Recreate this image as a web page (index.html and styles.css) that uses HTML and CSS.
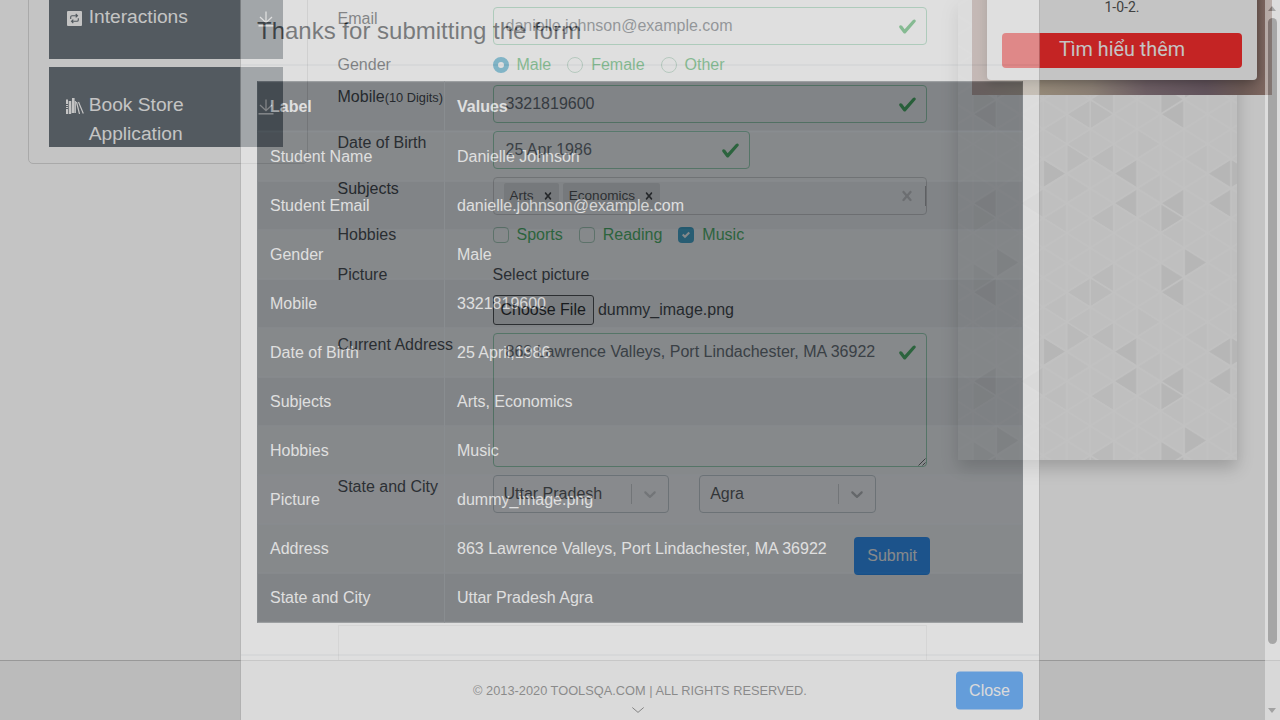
FILE: index.html
```html
<!DOCTYPE html>
<html lang="en">
<head>
<meta charset="utf-8">
<title>Student Registration Form</title>
<link rel="stylesheet" href="styles.css">
</head>
<body>
<svg class="defs" width="0" height="0">
  <defs>
    <symbol id="tick" viewBox="0 0 8 8"><path fill="#28a745" d="M2.3 6.73L.6 4.53c-.4-1.04.46-1.4 1.1-.8l1.1 1.4 3.4-3.8c.6-.63 1.6-.27 1.2.7l-4 4.6c-.43.5-.8.4-1.1.1z"/></symbol>
    <symbol id="down" viewBox="0 0 20 20"><path fill="currentColor" d="M4.516 7.548c0.436-0.446 1.043-0.481 1.576 0l3.908 3.747 3.908-3.747c0.533-0.481 1.141-0.446 1.574 0 0.436 0.445 0.408 1.197 0 1.615-0.406 0.418-4.695 4.502-4.695 4.502-0.217 0.223-0.502 0.335-0.787 0.335s-0.57-0.112-0.789-0.335c0 0-4.287-4.084-4.695-4.502s-0.436-1.17 0-1.615z"/></symbol>
    <symbol id="cross" viewBox="0 0 20 20"><path fill="currentColor" d="M14.348 14.849c-0.469 0.469-1.229 0.469-1.697 0l-2.651-3.030-2.651 3.029c-0.469 0.469-1.229 0.469-1.697 0-0.469-0.469-0.469-1.229 0-1.697l2.758-3.15-2.759-3.152c-0.469-0.469-0.469-1.228 0-1.697s1.228-0.469 1.697 0l2.652 3.031 2.651-3.031c0.469-0.469 1.228-0.469 1.697 0s0.469 1.229 0 1.697l-2.758 3.152 2.758 3.15c0.469 0.469 0.469 1.229 0 1.698z"/></symbol>
    <symbol id="expand" viewBox="0 0 16 16"><path fill="none" stroke="#fff" stroke-width="1.300" d="M8 .5v11M2 6l6 5.700L14 6"/><path fill="none" stroke="#fff" stroke-width="1.600" d="M.5 14.800h15"/></symbol>
  </defs>
</svg>

<div class="page">
  <div class="columns">
    <aside class="sidebar">
      <div class="group">
        <span class="group-label">
          <svg class="group-icon" viewBox="0 0 16 16"><rect x="1" width="15" height="15" rx="1" fill="#fff"/><path fill="none" stroke="#6c757d" stroke-width="1.100" d="M4.700 8V6q0-1.300 1.300-1.300H11M9.700 3l1.800 1.700-1.800 1.700M12.300 7.300V9q0 1.300-1.300 1.300H6M7.300 8.600l-1.800 1.700 1.800 1.700"/></svg>
          <span>Interactions</span>
        </span>
        <svg class="group-arrow"><use href="#expand"/></svg>
      </div>
      <div class="group group-tall">
        <span class="group-label">
          <svg class="group-icon books" viewBox="0 0 18 16"><path fill="#fff" d="M0 1.500h2V6H0zM0 7h2v1H0zM0 9h2v1H0zM0 11h2v5H0zM2.700 3h2.500v13H2.700zM6 0h2.600v15H5.700z"/><path stroke="#fff" stroke-width="1.200" d="M9.300 3l0 12M10.500 4l3 12M12.500 4l4.800 11.500" fill="none"/></svg>
          <span>Book Store<br>Application</span>
        </span>
        <svg class="group-arrow"><use href="#expand"/></svg>
      </div>
    </aside>

    <main class="form">
      <div class="row"><div class="label">Email</div>
        <div class="input">danielle.johnson@example.com<svg class="tick"><use href="#tick"/></svg></div></div>
      <div class="row row-options"><div class="label">Gender</div>
        <div class="options"><span class="opt"><i class="radio on"></i>Male</span><span class="opt"><i class="radio"></i>Female</span><span class="opt"><i class="radio"></i>Other</span></div></div>
      <div class="row"><div class="label">Mobile<small>(10 Digits)</small></div>
        <div class="input">3321819600<svg class="tick"><use href="#tick"/></svg></div></div>
      <div class="row"><div class="label">Date of Birth</div>
        <div class="input date">25 Apr 1986<svg class="tick"><use href="#tick"/></svg></div></div>
      <div class="row"><div class="label">Subjects</div>
        <div class="input tags"><span class="tag">Arts<svg><use href="#cross"/></svg></span><span class="tag">Economics<svg><use href="#cross"/></svg></span><svg class="clear"><use href="#cross"/></svg><i class="sep"></i></div></div>
      <div class="row row-options"><div class="label">Hobbies</div>
        <div class="options"><span class="opt"><i class="check"></i>Sports</span><span class="opt"><i class="check"></i>Reading</span><span class="opt"><i class="check on"><svg viewBox="0 0 8 8"><path fill="#fff" d="M6.564.75l-3.590 3.612-1.538-1.550L0 4.260 2.974 7.250 8 2.193z"/></svg></i>Music</span></div></div>
      <div class="row row-picture"><div class="label">Picture</div>
        <div class="file"><div class="file-title">Select picture</div><div class="file-line"><span class="file-btn">Choose File</span><span>dummy_image.png</span></div></div></div>
      <div class="row row-address"><div class="label">Current Address</div>
        <div class="input area">863 Lawrence Valleys, Port Lindachester, MA 36922<svg class="tick"><use href="#tick"/></svg><svg class="grip" viewBox="0 0 8 8"><path stroke="#333" stroke-width=".9" d="M.5 7.500l7-7M4.500 7.500l3-3"/></svg></div></div>
      <div class="row"><div class="label">State and City</div>
        <div class="selects">
          <div class="select">Uttar Pradesh<i></i><svg class="soft"><use href="#down"/></svg></div>
          <div class="select">Agra<i></i><svg><use href="#down"/></svg></div>
        </div></div>
      <div class="actions"><span class="submit">Submit</span></div>
      <div class="slot"></div>
    </main>

    <div class="ads">
      <svg class="pattern" viewBox="958 0 279 460">
        <defs>
          <path id="tl" d="M1 0l21.900-13.600v27.200z"/>
          <path id="tr" d="M-1 0l-21.900-13.600v27.200z"/>
          <pattern id="mesh" patternUnits="userSpaceOnUse" x="972.900" y="114.300" width="46.930" height="29.670">
            <path fill="none" stroke="#fdfdfd" stroke-width="1.200" d="M0 0v29.670M23.460 0v29.670M46.930 0v29.670M0 0L46.930 29.670M0 29.670L46.930 0"/>
          </pattern>
          <pattern id="cells" patternUnits="userSpaceOnUse" x="940" y="80" width="340" height="178" viewBox="940 80 340 178">
            <g fill="#ededed">
              <use href="#tl" x="972.900" y="114.300"/><use href="#tl" x="1160.600" y="114.300"/>
              <use href="#tr" x="1066" y="173.500"/><use href="#tl" x="1113.700" y="173.500"/><use href="#tl" x="1207.600" y="173.500"/><use href="#tr" x="1254.500" y="173.500"/>
              <use href="#tl" x="972.900" y="203.200"/><use href="#tl" x="1113.700" y="203.200"/><use href="#tl" x="1160.600" y="203.200"/><use href="#tl" x="1207.600" y="203.200"/>
              <use href="#tr" x="1184.100" y="218"/><use href="#tr" x="1207.600" y="84.300"/><use href="#tr" x="1207.600" y="262.300"/>
              <use href="#tr" x="1184.100" y="99.300"/><use href="#tr" x="1019.800" y="84.300"/><use href="#tr" x="1019.800" y="262.300"/>
            </g>
            <g fill="#f2f2f2">
              <use href="#tl" x="1066.800" y="114.300"/><use href="#tr" x="1113.700" y="114.300"/>
              <use href="#tr" x="1090.200" y="158.600"/><use href="#tl" x="1090.200" y="158.600"/><use href="#tl" x="1019.800" y="203.200"/>
              <use href="#tl" x="1090.200" y="218"/><use href="#tr" x="996.400" y="218"/><use href="#tr" x="996.400" y="99.300"/><use href="#tl" x="1090.200" y="99.300"/>
            </g>
            <g fill="#f6f6f6">
              <use href="#tl" x="1043.300" y="129.300"/><use href="#tr" x="1160.600" y="143.900"/><use href="#tl" x="1184.100" y="158.600"/><use href="#tl" x="1066.800" y="144"/><use href="#tl" x="1137.200" y="188.500"/><use href="#tr" x="1090.200" y="188.500"/><use href="#tl" x="1137.200" y="218"/><use href="#tl" x="1043.300" y="218"/><use href="#tl" x="1160.600" y="233"/>
            </g>
          </pattern>
        </defs>
        <rect x="958" width="279" height="460" fill="#f9f9f9"/>
        <rect x="958" width="279" height="460" fill="url(#cells)"/>
        <rect x="958" width="279" height="460" fill="url(#mesh)"/>
      </svg>
      <div class="banner">
        <div class="card">
          <div class="card-text">1-0-2.</div>
          <div class="card-btn">Tìm hiểu thêm</div>
        </div>
      </div>
    </div>
  </div>
  <footer class="footer">
    <span>© 2013-2020 TOOLSQA.COM | ALL RIGHTS RESERVED.</span>
    <svg class="footer-chev" viewBox="0 0 12 6"><path fill="none" stroke="#222" stroke-width="1" d="M.3.5L6 5.400 11.700.5"/></svg>
  </footer>
</div>

<div class="backdrop"></div>

<div class="modal">
  <div class="dialog">
    <div class="modal-head">Thanks for submitting the form</div>
    <div class="modal-body">
      <table class="result">
        <thead><tr><th class="key">Label</th><th>Values</th></tr></thead>
        <tbody>
          <tr><td>Student Name</td><td>Danielle Johnson</td></tr>
          <tr><td>Student Email</td><td>danielle.johnson@example.com</td></tr>
          <tr><td>Gender</td><td>Male</td></tr>
          <tr><td>Mobile</td><td>3321819600</td></tr>
          <tr><td>Date of Birth</td><td>25 April,1986</td></tr>
          <tr><td>Subjects</td><td>Arts, Economics</td></tr>
          <tr><td>Hobbies</td><td>Music</td></tr>
          <tr class="hovered"><td>Picture</td><td>dummy_image.png</td></tr>
          <tr><td>Address</td><td>863 Lawrence Valleys, Port Lindachester, MA 36922</td></tr>
          <tr><td>State and City</td><td>Uttar Pradesh Agra</td></tr>
        </tbody>
      </table>
    </div>
    <div class="modal-foot"><span class="close">Close</span></div>
  </div>
  <div class="scrollbar">
    <i class="arrow up"></i><i class="thumb"></i><i class="arrow dn"></i>
  </div>
</div>
</body>
</html>
```

FILE: styles.css
```css
* { box-sizing: border-box; }
html, body { margin: 0; height: 100%; overflow: hidden; }
body {
  position: relative;
  height: 720px;
  background: #fff;
  color: #212529;
  font: 16px/24px "Liberation Sans", Arial, sans-serif;
}
i { display: block; }
svg { display: block; flex: none; }
.defs { position: absolute; }

/* page under the dialog */
.page { position: absolute; inset: 0; overflow: hidden; }
.columns { display: flex; height: 720px; }

.sidebar {
  width: 280px;
  height: 174px;
  margin: -10px 0 0 28px;
  padding: 0 24px 0 20px;
  border: 1px solid #dcdcdc;
  border-radius: 5px;
}
.group {
  display: flex;
  justify-content: space-between;
  width: 234px;
  height: 68px;
  margin-bottom: 8px;
  padding: 12px 9px 0 17px;
  background: #6c757d;
  color: #fff;
  font-size: 19.2px;
  line-height: 28.8px;
}
.group-tall { height: 80px; padding-top: 24px; }
.group-label { display: flex; gap: 6.7px; }
.group-icon { width: 16px; height: 16px; margin-top: 8px; }
.books { width: 18px; margin: 7px -2px 0 0; }
.group-arrow { width: 16px; height: 16px; margin-top: 8px; }

.form { width: 622px; margin-left: 29.5px; padding-top: 7px; }
.row { display: flex; height: 38px; margin-bottom: 8px; }
.label { width: 155px; white-space: nowrap; }
.label small { font-size: 12.8px; }
.input {
  position: relative;
  width: 434.4px;
  padding: 6px 12px;
  border: 1px solid #8acfa8;
  border-radius: 4px;
  color: #495057;
}
.tick { position: absolute; top: 8.5px; right: 8.7px; width: 19px; height: 19px; }
.date { width: 257.4px; }
.row-options { height: 24px; }
.options { display: flex; gap: 16px; }
.opt { display: flex; gap: 8px; color: #28a745; }
.radio, .check { width: 16px; height: 16px; margin-top: 4px; border: 1px solid #9ccab0; }
.radio { border-radius: 50%; }
.check { border-radius: 4px; }
.radio.on { border: 5px solid #1d97c5; }
.check.on { border: 0; padding: 4px; background: #1d97c5; }
.tags { display: flex; align-items: center; gap: 4px; padding: 0 0 0 10px; border-color: #ccc; }
.tag {
  display: flex;
  align-items: center;
  height: 26px;
  padding: 0 4px 0 6px;
  border-radius: 2px;
  background: #e6e6e6;
  color: #333;
  font-size: 13.6px;
}
.tag svg { width: 14px; height: 14px; margin-left: 7px; color: #222; }
.clear { width: 20px; height: 20px; margin-left: auto; color: #ccc; }
.sep { width: 1px; height: 20px; margin-left: 4px; background: #aaa; }
.row-picture { height: 62px; margin-top: 16px; }
.file-title { height: 32px; }
.file-line { display: flex; align-items: center; gap: 4px; }
.file-btn { height: 30px; padding: 2px 7px; border: 1px solid #333; border-radius: 3px; background: #efefef; color: #000; }
.row-address { height: 134px; }
.grip { position: absolute; right: 0; bottom: 0; width: 8px; height: 8px; }
.selects { display: flex; gap: 30px; }
.select {
  display: flex;
  align-items: center;
  width: 176.7px;
  padding: 0 8px 1px 10px;
  border: 1px solid #bcc4c9;
  border-radius: 4px;
  color: #333;
}
.select i { width: 1px; height: 20px; margin: 1px 8px 0 auto; background: #ccc; }
.select svg { width: 20px; height: 20px; margin-top: 1px; color: #aaa; }
.select .soft { color: #ccc; }
.actions { display: flex; justify-content: flex-end; width: 592.5px; padding-top: 16px; }
.submit { height: 38px; padding: 7px 13px; border-radius: 4px; background: #007fff; color: #fff; }
.slot { width: 589.5px; height: 100px; margin-top: 50px; border: 1px solid #e8e8e8; }

.ads { position: relative; margin-left: -1.5px; }
.pattern { width: 279px; height: 460px; box-shadow: 0 8px 16px rgba(0, 0, 0, .2); }
.banner {
  position: absolute;
  top: -40px;
  left: 14px;
  width: 300px;
  height: 135px;
  padding: 0 15px 15px;
  background: linear-gradient(90deg, #c0a39c 0, #c5b59e 20%, #b5a698 40%, #8f7b83 58%, #806d78 78%, #8d756f 90%, #a98a80 100%);
}
.card {
  height: 120px;
  padding: 36px 15px 0;
  border-radius: 4px;
  background: #fff;
  box-shadow: 0 2px 12px rgba(0, 0, 0, .35);
  text-align: center;
  font-family: Roboto, sans-serif;
}
.card-text { height: 37px; line-height: 22px; font-size: 14px; color: #555; }
.card-btn { height: 35px; border-radius: 4px; background: #ff302f; color: #fff; font-size: 19.8px; line-height: 33px; }

.footer {
  position: absolute;
  inset: 660px 0 0;
  display: flex;
  flex-direction: column;
  align-items: center;
  padding-top: 18px;
  border-top: 1px solid #c6c6c6;
  background: #f4f4f4;
  color: #333;
  font-size: 12.8px;
}
.footer-chev { width: 12px; height: 6px; margin: 4px 4px 0 0; }

.backdrop { position: absolute; inset: 0; background: #000; opacity: .23; }

/* dialog part way through its fade */
.modal { position: absolute; inset: 0; display: flex; justify-content: space-between; padding-left: 240px; opacity: .46; overflow: hidden; }
.dialog {
  width: 800px;
  height: 760px;
  border: solid rgba(0, 0, 0, .35);
  border-width: 0 1px;
  background: #fff;
  transform: translateY(-.5px);
}
.modal-head { height: 66px; padding: 13px 16px 0; border-bottom: 1px solid #dee2e6; font-size: 24px; line-height: 36px; }
.modal-body { height: 589px; padding: 16px; }
.result { width: 766px; border-collapse: collapse; background: #343a40; color: #fff; }
.result th, .result td { padding: 12px; border: 1px solid #454d55; text-align: left; }
.result .key { width: 187px; }
.result th { border-bottom-width: 2px; }
.result tbody tr:nth-child(odd) { background: rgba(255, 255, 255, .05); }
.result tbody tr.hovered { background: rgba(255, 255, 255, .075); }
.modal-foot { display: flex; justify-content: flex-end; padding: 16px; border-top: 1px solid #dee2e6; }
.close { height: 38px; padding: 7px 13px; border-radius: 4px; background: #007bff; color: #fff; }
.scrollbar { width: 15px; height: 720px; padding: 6px 3px; background: #fcfcfc; }
.thumb { width: 9px; height: 626px; margin: 7px 0 64px; border-radius: 5px; background: #858585; }
.arrow { width: 0; border: solid transparent; border-width: 0 4.5px; }
.up { border-bottom: 5px solid #858585; }
.dn { border-top: 5px solid #858585; }
```
